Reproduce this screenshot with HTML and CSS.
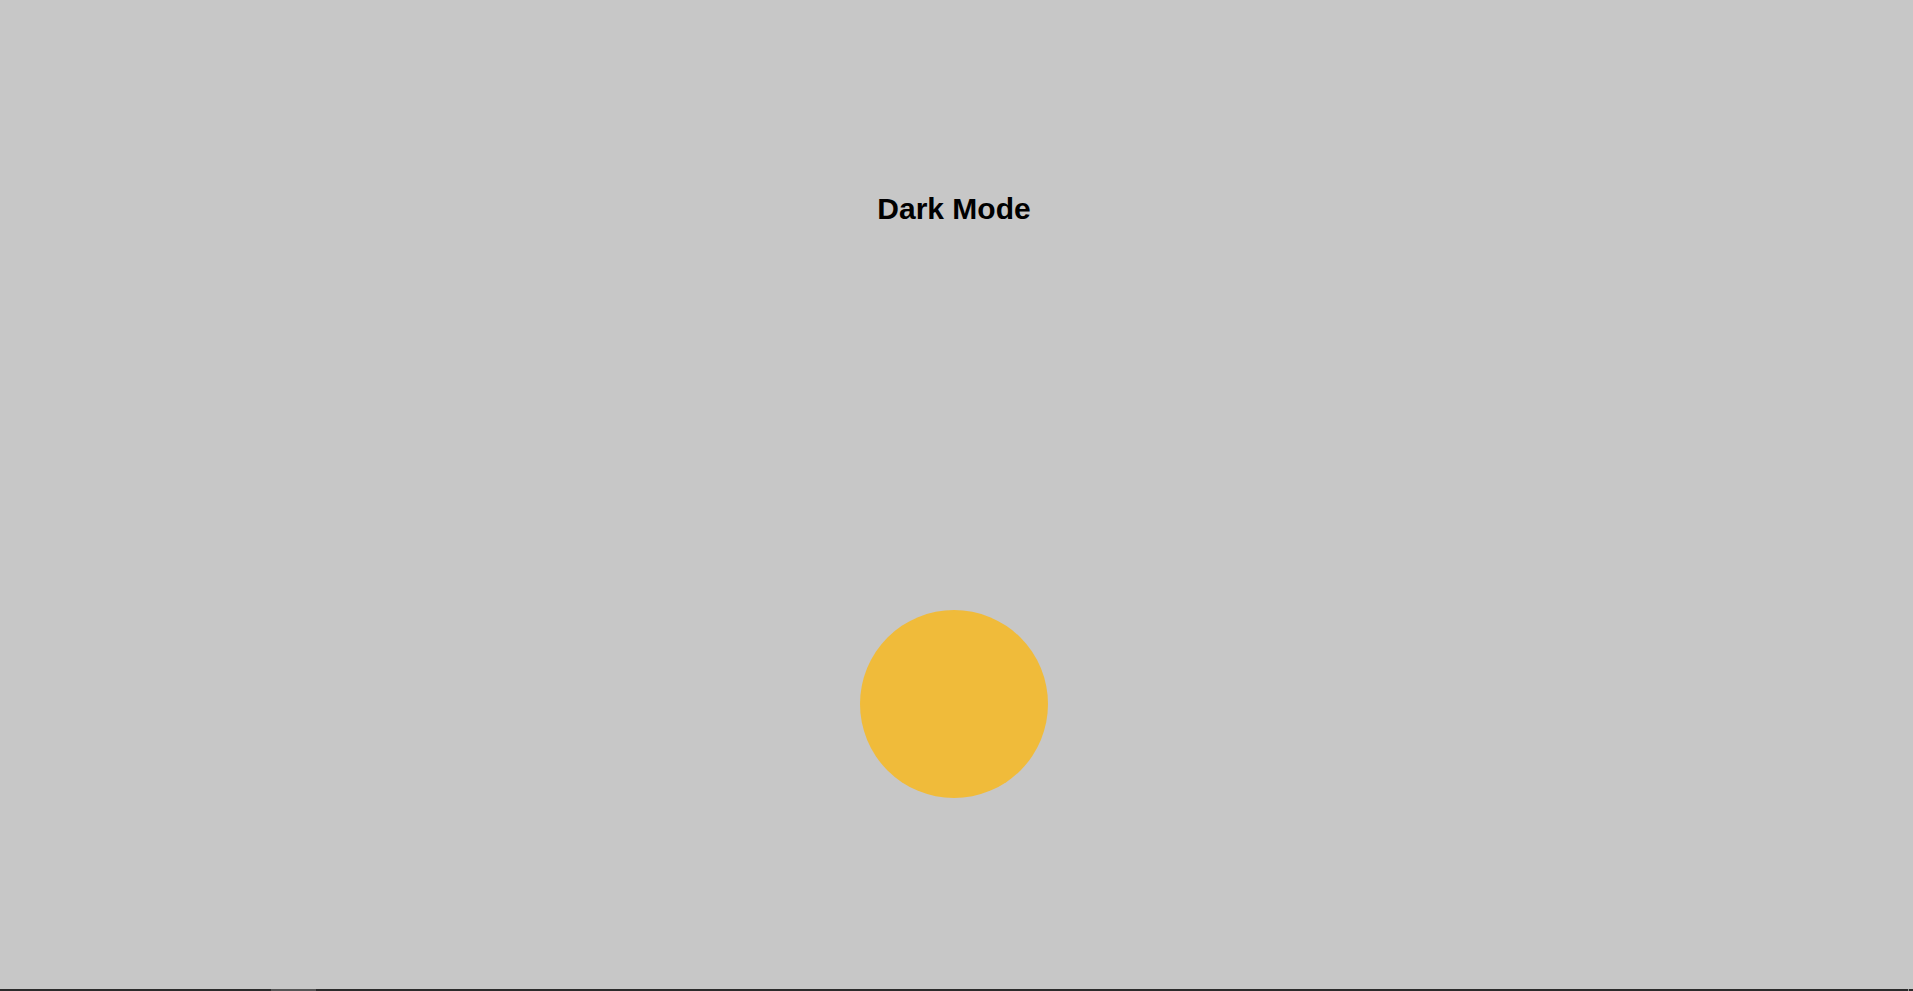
FILE: index.html
```html
<!DOCTYPE html>
<html lang="en">
<head>
<meta charset="utf-8">
<title>Dark Mode</title>
<link rel="stylesheet" href="styles.css">
</head>
<body>
<div class="page">
  <main class="content">
    <h1 class="title">Dark Mode</h1>
    <button class="toggle" aria-label="Toggle dark mode"></button>
  </main>
  <div class="bottom-bar">
    <span class="bar-track-left"></span>
    <span class="bar-thumb"></span>
    <span class="bar-track-right"></span>
    <span class="bar-end"></span>
  </div>
</div>
</body>
</html>
```

FILE: styles.css
```css
html, body {
  margin: 0;
  padding: 0;
  height: 100%;
}

body {
  background: #c7c7c7;
  font-family: "Liberation Sans", Arial, sans-serif;
  color: #000;
  overflow: hidden;
}

.page {
  height: 100vh;
  display: flex;
  flex-direction: column;
}

.content {
  flex: 1;
  display: flex;
  flex-direction: column;
  align-items: center;
  padding-top: 192px;
  padding-right: 5px;
}

.title {
  margin: 0;
  font-size: 30px;
  line-height: 34px;
  font-weight: 700;
}

.toggle {
  margin-top: 384px;
  width: 188px;
  height: 188px;
  border: none;
  padding: 0;
  border-radius: 50%;
  background: #f0bb3a;
}

.bottom-bar {
  height: 2px;
  display: flex;
  background: #2b2b2b;
}

.bar-track-left {
  width: 271px;
}

.bar-thumb {
  width: 45px;
  background: #555555;
}

.bar-track-right {
  flex: 1;
}

.bar-end {
  width: 1px;
  margin-right: 4px;
  background: #9a9a9a;
}
```
